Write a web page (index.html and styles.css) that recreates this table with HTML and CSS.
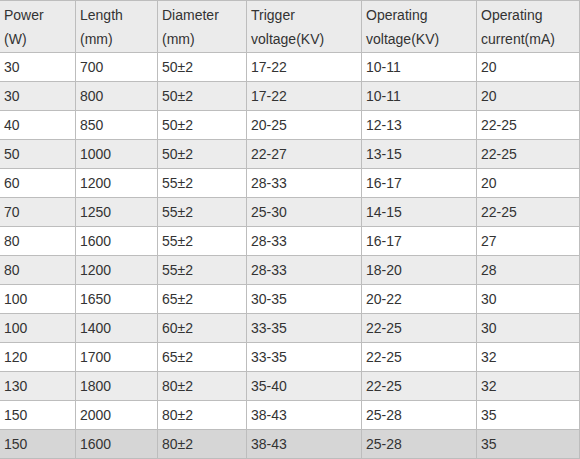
FILE: index.html
```html
<!DOCTYPE html>
<html>
<head>
<meta charset="utf-8">
<link rel="stylesheet" href="styles.css">
</head>
<body>
<table class="spec">
<colgroup>
<col class="c1"><col class="c2"><col class="c3"><col class="c4"><col class="c5"><col class="c6">
</colgroup>
<thead>
<tr><th>Power<br>(W)</th><th>Length<br>(mm)</th><th>Diameter<br>(mm)</th><th>Trigger<br>voltage(KV)</th><th>Operating<br>voltage(KV)</th><th>Operating<br>current(mA)</th></tr>
</thead>
<tbody>
<tr><td>30</td><td>700</td><td>50±2</td><td>17-22</td><td>10-11</td><td>20</td></tr>
<tr><td>30</td><td>800</td><td>50±2</td><td>17-22</td><td>10-11</td><td>20</td></tr>
<tr><td>40</td><td>850</td><td>50±2</td><td>20-25</td><td>12-13</td><td>22-25</td></tr>
<tr><td>50</td><td>1000</td><td>50±2</td><td>22-27</td><td>13-15</td><td>22-25</td></tr>
<tr><td>60</td><td>1200</td><td>55±2</td><td>28-33</td><td>16-17</td><td>20</td></tr>
<tr><td>70</td><td>1250</td><td>55±2</td><td>25-30</td><td>14-15</td><td>22-25</td></tr>
<tr><td>80</td><td>1600</td><td>55±2</td><td>28-33</td><td>16-17</td><td>27</td></tr>
<tr><td>80</td><td>1200</td><td>55±2</td><td>28-33</td><td>18-20</td><td>28</td></tr>
<tr><td>100</td><td>1650</td><td>65±2</td><td>30-35</td><td>20-22</td><td>30</td></tr>
<tr><td>100</td><td>1400</td><td>60±2</td><td>33-35</td><td>22-25</td><td>30</td></tr>
<tr><td>120</td><td>1700</td><td>65±2</td><td>33-35</td><td>22-25</td><td>32</td></tr>
<tr><td>130</td><td>1800</td><td>80±2</td><td>35-40</td><td>22-25</td><td>32</td></tr>
<tr><td>150</td><td>2000</td><td>80±2</td><td>38-43</td><td>25-28</td><td>35</td></tr>
<tr class="hl"><td>150</td><td>1600</td><td>80±2</td><td>38-43</td><td>25-28</td><td>35</td></tr>
</tbody>
</table>
</body>
</html>
```
FILE: styles.css
```css
html, body {
  margin: 0;
  padding: 0;
  background: #ffffff;
}
.spec {
  border-collapse: collapse;
  table-layout: fixed;
  width: 580px;
  margin-left: -1px;
  font-family: "Liberation Sans", Arial, sans-serif;
  font-size: 14px;
  color: #333333;
}
.c1 { width: 76px; }
.c2 { width: 82px; }
.c3 { width: 89px; }
.c4 { width: 115px; }
.c5 { width: 115px; }
.c6 { width: 103px; }
.spec th, .spec td {
  border: 1px solid #bdbdbd;
  padding: 0 0 0 4px;
  text-align: left;
  vertical-align: middle;
  font-weight: normal;
  white-space: nowrap;
}
.spec th {
  background: #ebebeb;
  line-height: 24px;
  height: 51px;
  padding-top: 0;
}
.spec td {
  height: 28px;
  line-height: 16px;
}
.spec tbody tr:nth-child(even) td {
  background: #ececec;
}
.spec tbody tr.hl td {
  background: #d6d6d6;
}
```
